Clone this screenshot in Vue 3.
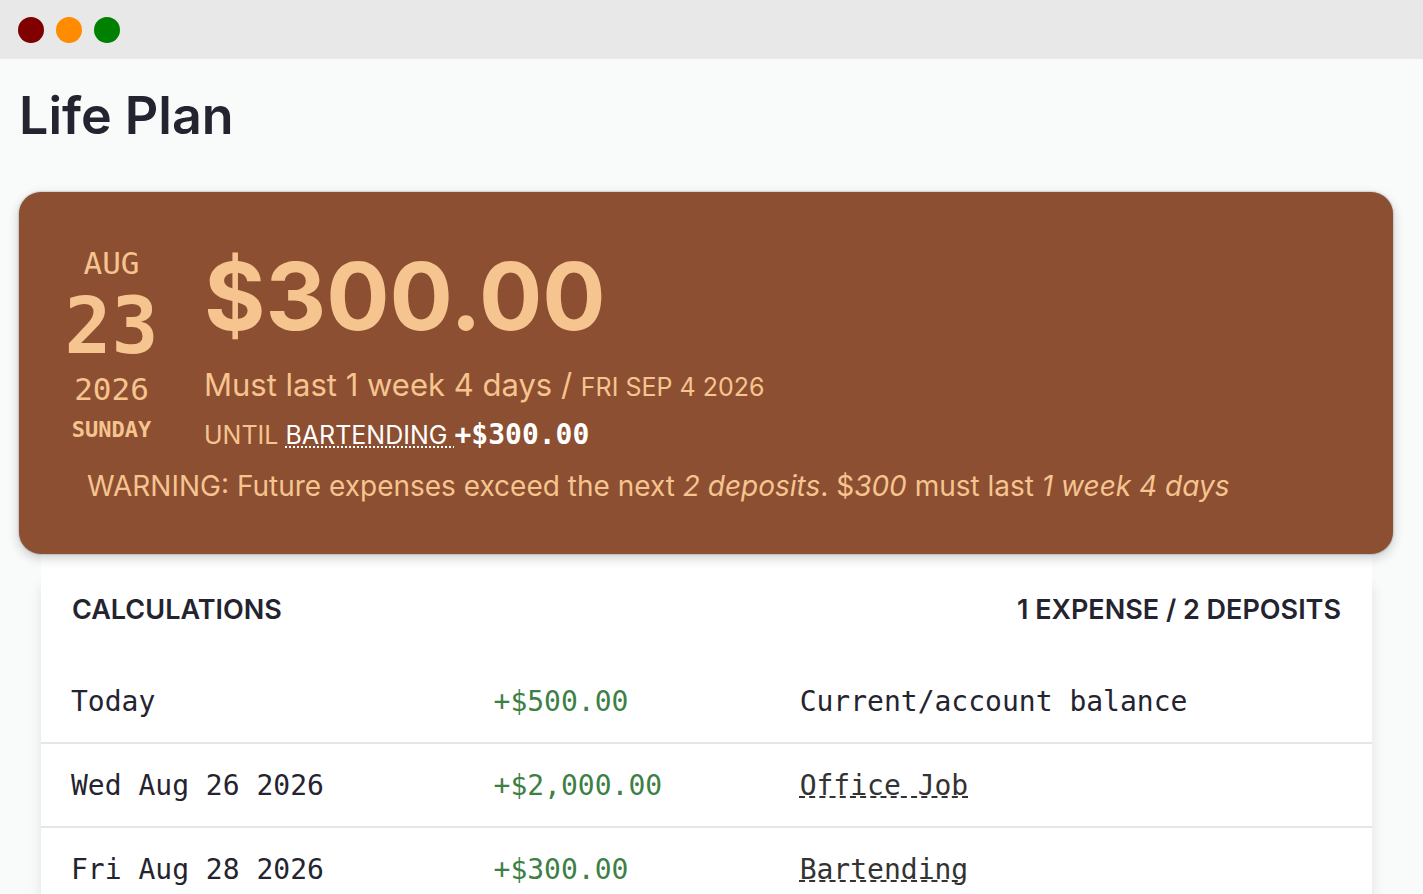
<script setup>
const rows = [
  { date: 'Today', amount: '+$500.00', label: 'Current/account balance', link: false },
  { date: 'Wed Aug 26 2026', amount: '+$2,000.00', label: 'Office Job', link: true },
  { date: 'Fri Aug 28 2026', amount: '+$300.00', label: 'Bartending', link: true },
]
</script>

<template>
  <div class="window">
    <div class="titlebar">
      <span class="dot red"></span>
      <span class="dot orange"></span>
      <span class="dot green"></span>
    </div>
    <main class="page">
      <h1>Life Plan</h1>
      <section class="card">
        <div class="summary">
          <div class="date">
            <span class="month">AUG</span>
            <strong class="day">23</strong>
            <span class="year">2026</span>
            <strong class="weekday">SUNDAY</strong>
          </div>
          <div class="balance">
            <div class="amount">$300.00</div>
            <div class="duration">Must last 1 week 4 days / <small>FRI SEP 4 2026</small></div>
            <div class="until">UNTIL <a href="#bartending">BARTENDING&nbsp;</a><b>+$300.00</b></div>
          </div>
        </div>
        <p class="warning">WARNING: Future expenses exceed the next <em>2 deposits</em>. $<em>300</em> must last <em>1 week 4 days</em></p>
      </section>
      <section class="panel">
        <header class="panel-head">
          <h2>CALCULATIONS</h2>
          <h2>1 EXPENSE / 2 DEPOSITS</h2>
        </header>
        <table>
          <tbody>
            <tr v-for="row in rows" :key="row.date">
              <td class="col-date">{{ row.date }}</td>
              <td class="col-amount">{{ row.amount }}</td>
              <td>
                <a v-if="row.link" href="#income">{{ row.label }}</a>
                <template v-else>{{ row.label }}</template>
              </td>
            </tr>
          </tbody>
        </table>
      </section>
    </main>
  </div>
</template>

<style>
body {
  background: #f9fbfa;
  overflow: hidden;
}
</style>

<style scoped>
.window {
  height: 100vh;
  overflow: hidden;
  color: #242430;
  font-family: Inter, "Liberation Sans", sans-serif;
}
.titlebar {
  display: flex;
  align-items: center;
  gap: 12px;
  height: 59px;
  padding: 0 18px;
  box-sizing: border-box;
  background: #e8e8e8;
}
.dot {
  width: 26px;
  height: 26px;
  border-radius: 50%;
}
.red { background: #800000; }
.orange { background: #ff8c00; }
.green { background: #008000; }
.page {
  padding: 21px 30px 0 19px;
}
h1 {
  margin: 0 0 40px;
  font-size: 52px;
  line-height: 72px;
  font-weight: 600;
}
.card {
  position: relative;
  padding: 48px 48px 46px;
  border-radius: 22px;
  background: #8c4f32;
  color: #f6c48f;
  box-shadow: 0 0 2px rgba(0, 0, 0, 0.4), 0 4px 12px rgba(0, 0, 0, 0.2);
}
.summary {
  display: flex;
  gap: 48px;
}
.date {
  display: flex;
  flex-direction: column;
  align-items: center;
  width: 89px;
  font-family: "DejaVu Sans Mono", monospace;
}
.month, .year {
  font-size: 31px;
  line-height: 46px;
}
.day {
  font-size: 78px;
  line-height: 80px;
}
.weekday {
  font-size: 22px;
  line-height: 36px;
}
.amount {
  font-size: 94px;
  line-height: 112px;
  font-weight: 700;
}
.duration {
  font-size: 31px;
  line-height: 66px;
}
.duration small, .until {
  font-size: 25px;
}
.until {
  line-height: 30px;
}
.until a, .until b {
  color: #fff;
}
.until a {
  text-decoration: underline dotted 2px;
  text-underline-offset: 2px;
}
.until b {
  font-family: "DejaVu Sans Mono", monospace;
  font-size: 28px;
}
.warning {
  margin: 14px 0 0 20px;
  font-size: 28px;
  line-height: 44px;
}
.panel {
  margin: 0 21px 0 22px;
  background: #fff;
  box-shadow: 0 32px 12px rgba(0, 0, 0, 0.1);
}
.panel-head {
  display: flex;
  justify-content: space-between;
  padding: 36px 31px 30px;
}
h2 {
  margin: 0;
  font-size: 27px;
  line-height: 40px;
  font-weight: 600;
}
table {
  width: 100%;
  border-collapse: separate;
  border-spacing: 0;
  table-layout: fixed;
  font-family: "DejaVu Sans Mono", monospace;
  font-size: 28px;
}
td {
  height: 82px;
  padding: 0;
  border-bottom: 2px solid #e6e6e6;
}
.col-date {
  width: 34%;
  padding-left: 30px;
  box-sizing: border-box;
}
.col-amount {
  width: 23%;
  color: #3d8045;
}
td a {
  color: #333;
  text-decoration: underline dashed 2px;
  text-underline-offset: 2px;
}
</style>
